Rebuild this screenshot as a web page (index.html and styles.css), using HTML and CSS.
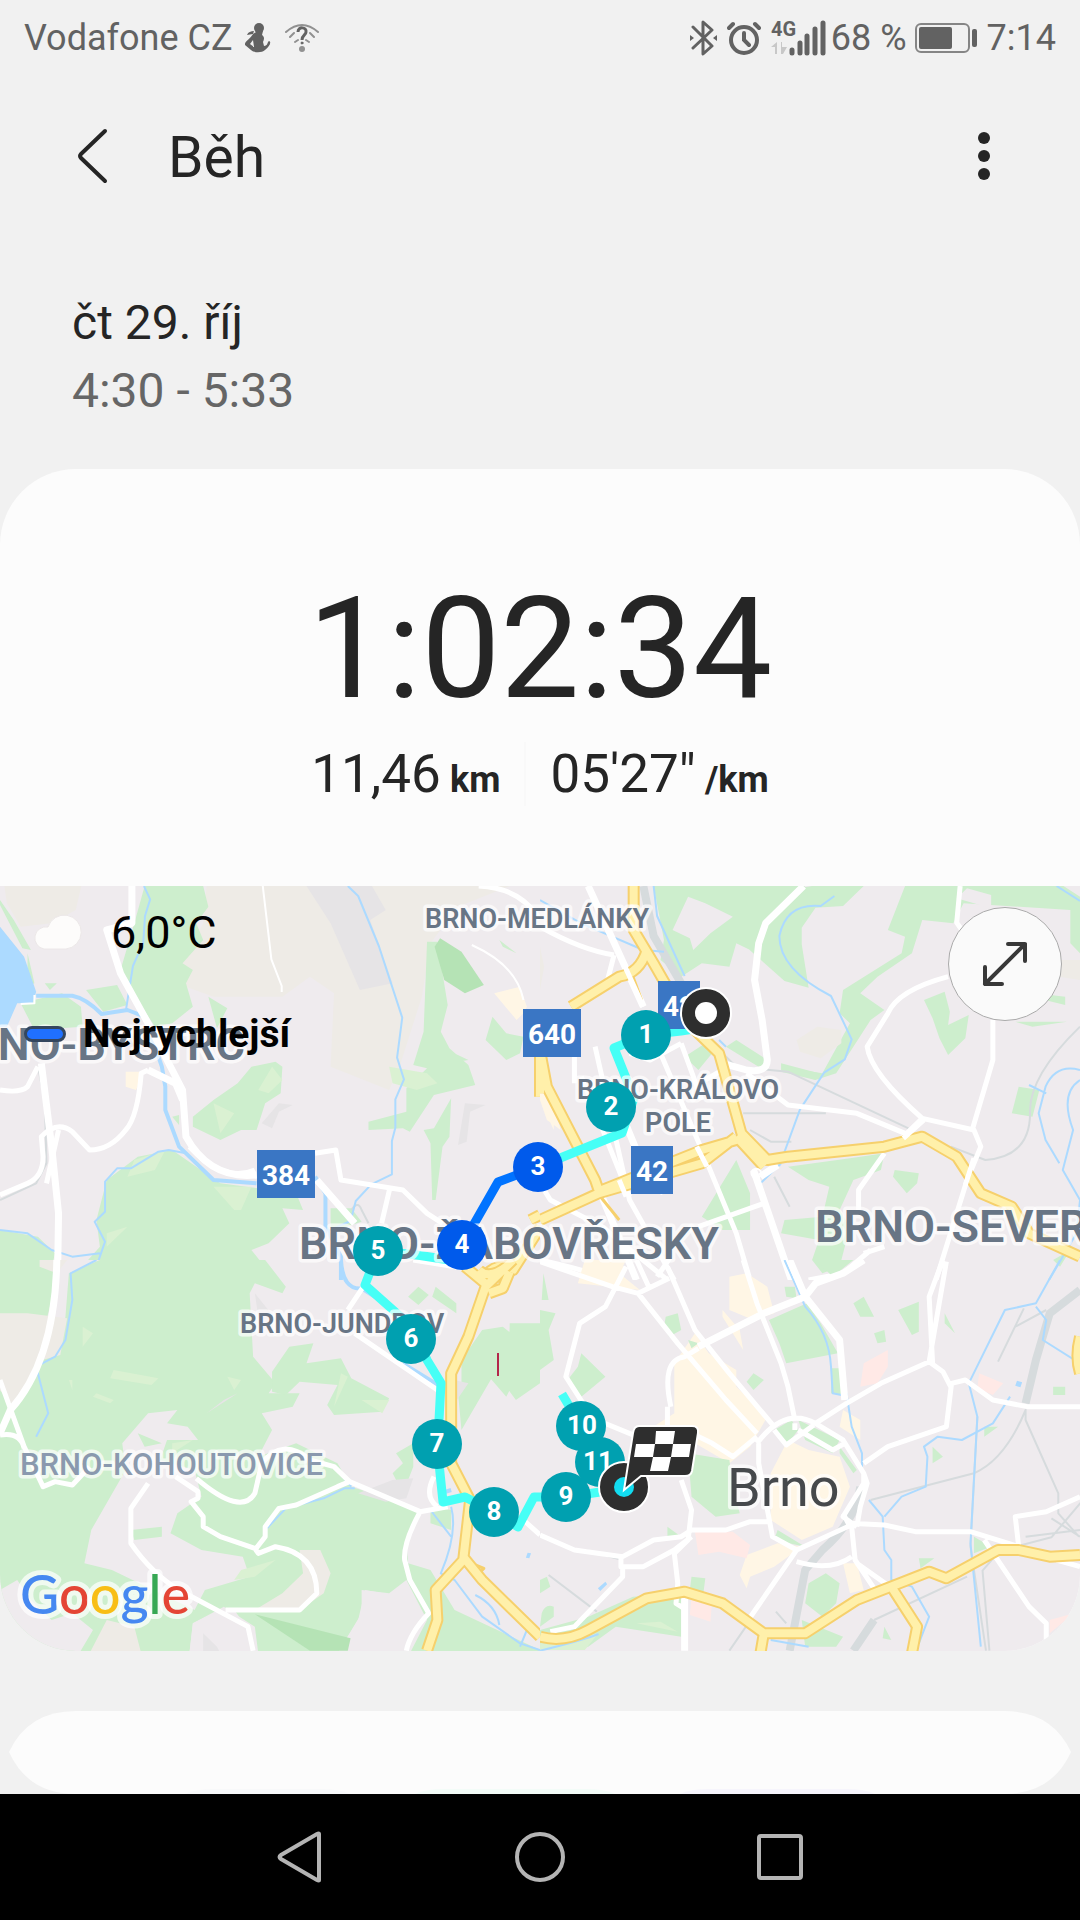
FILE: index.html
```html
<!DOCTYPE html>
<html lang="cs">
<head>
    <meta charset="UTF-8">
    <meta name="viewport" content="width=device-width, initial-scale=1.0">
    <title>Běh</title>
    <link rel="stylesheet" href="styles.css">
</head>
<body>
    <div class="status-bar">
        <div class="status-group status-left">
            <span>Vodafone CZ</span>
            <svg width="26" height="30" viewBox="0 0 26 30" fill="#626262">
                <circle cx="14" cy="5" r="5"/>
                <path d="M10 8h8l-1 4c3 2 2 5 1 7l1 4c4 0 3-4 5-5 3 1 0 6-4 9-3 3-11 3-14 0l-6-5c-1-3 5-6 8-11 1-1 2-1 3-2zM8 17l-3 4 4 3zM2 12c1-3 4-4 7-4l-1 3z" fill-rule="evenodd"/>
            </svg>
            <svg width="36" height="30" viewBox="0 0 36 30" fill="none" stroke="#919191" stroke-width="2" stroke-linecap="round">
                <path d="M2 9Q18-5 34 9M6 14l4-4M30 14l-4-4M11 19l3-2M25 19l-3-2"/>
                <path d="M14 9c0-6 9-5 8 0 0 3-4 3-4 8" stroke="#626262" stroke-width="3" stroke-linecap="butt"/>
                <circle cx="18" cy="20" r="1" fill="#626262" stroke="#626262" stroke-width="1"/>
                <circle cx="18" cy="26" r="3" fill="#919191" stroke="none"/>
            </svg>
        </div>
        <div class="status-group status-right">
            <svg width="28" height="36" viewBox="0 0 28 36" fill="none" stroke="#626262" stroke-width="3" stroke-linejoin="round" stroke-linecap="round">
                <path d="M3 7l19 19-9 8V2l9 8L3 28"/>
                <path d="M0 15v6l4-3zM27 15v6l-4-3z" fill="#626262" stroke="none"/>
            </svg>
            <svg class="icon-alarm" width="34" height="36" viewBox="0 0 34 36" fill="none" stroke="#626262" stroke-width="4" stroke-linecap="round">
                <circle cx="17" cy="20" r="13"/>
                <path d="M17 13v7l5 5M2 8l4-4M32 8l-4-4"/>
            </svg>
            <svg class="icon-signal" width="56" height="36" viewBox="0 0 56 36">
                <text x="1" y="16" class="net-type">4G</text>
                <path d="M7 22v12H5v-7H1zM12 22v5h5l-4 7h-2V22z" fill="#c8c8c8"/>
                <path d="M22 30v3M30 23v10M37 16v17M45 9v24M53 3v30" stroke="#626262" stroke-width="5" stroke-linecap="round"/>
            </svg>
            <span>68 %</span>
            <svg class="icon-battery" width="62" height="30" viewBox="0 0 62 30">
                <rect x="1" y="1" width="53" height="28" rx="5" fill="none" stroke="#858585" stroke-width="2"/>
                <rect x="4" y="4" width="33" height="22" rx="2" fill="#626262"/>
                <rect x="57" y="6" width="5" height="18" rx="2" fill="#626262"/>
            </svg>
            <span>7:14</span>
        </div>
    </div>

    <header class="app-bar">
        <button class="icon-button" type="button" aria-label="Zpět">
            <svg width="34" height="58" viewBox="0 0 34 58" fill="none" stroke="#252525" stroke-width="4" stroke-linecap="round" stroke-linejoin="round">
                <path d="M29 4L5 27q-2 2 0 4l24 23"/>
            </svg>
        </button>
        <h1>Běh</h1>
        <button class="icon-button menu-button" type="button" aria-label="Další možnosti">
            <svg width="12" height="50" viewBox="0 0 12 50" fill="#252525">
                <circle cx="6" cy="7" r="6"/><circle cx="6" cy="25" r="6"/><circle cx="6" cy="43" r="6"/>
            </svg>
        </button>
    </header>

    <div class="date">
        <p>čt 29. říj</p>
        <p class="date-time">4:30 - 5:33</p>
    </div>

    <main class="card">
        <div class="duration">1:02:34</div>
        <div class="stats">
            <div class="stat">11,46 <b>km</b></div>
            <div class="stat">05'27" <b>/km</b></div>
        </div>

        <div class="map">
            <svg class="map-drawing" viewBox="0 0 1080 765">
                <!-- north-west -->
                <svg class="tile" x="0" y="-6" width="540" height="400" viewBox="0 0 1568 1200" preserveAspectRatio="none">
                    <path class="field" d="M10 0H240L220 90 150 130 60 140 20 70zM600 18H1480L1330 80 1250 190 1225 350 1160 560 1130 630 960 560 970 340 900 290 820 350 620 350 540 320 520 270 590 130z"/>
                    <path class="built" d="M890 18H1080L1120 90 1075 120 1140 310 1045 330 960 130zM760 730l50-60 40 5-40 20-20 50zM1350 670l60 5-45 20-10 90-25 10z"/>
                    <path class="park" d="M420 18H590L605 80 570 130 590 180 530 250 560 270 540 310 560 380 500 430 450 440 380 330 350 270 390 130zM60 370L180 340 235 380 240 440 100 450zM250 330l90-15 30 60-70 20zM605 350l55 35-30 60zM130 310h35l-20 20zM0 60l40 60 50 90-25-5-65-130zM80 220l20 90-20 10z"/>
                    <path class="park" d="M690 610L730 560 800 545 820 560 815 640 770 670 745 750 700 750 640 780 560 740 560 710 620 660zM500 710l20-5 0 30z"/>
                    <path class="park" d="M1240 185l30 0 30 190-20 80 25 50 55 50 20 60-120 30-70 110-20-10-100 5 0-25 110-30 0-70 60-60-40-10 30-100zM1310 655l-50 90-30 5 20 40 5 170 10 0 20-160 20-30zM1430 410l40 50 50 10-10 50-40 20-60-60zM1310 515l50 25-30 5zM1450 180l50 40-40-20z"/>
                    <path class="park" d="M400 830L500 810 570 860 640 910 860 940 880 990 820 985 840 1030 780 1090 730 1110 800 1200H190L230 1170 290 1100 280 1020 310 900zM960 985h60l30 40-90 30zM0 1050l110 20 50 50-20 80H0z"/>
                    <path class="wood" d="M1278 175L1340 215 1405 315 1350 340 1290 300 1262 200z"/>
                    <path class="meadow" d="M620 920l110 0-30 70-20 0zM390 840l90-30-30 60-80 20zM790 560l30 40-40 40-30-10zM620 670l60 30-40 60zM1130 560l110 20 30 30-60 20-70-20zM310 1060l60-20-60 60z"/>
                    <path class="urban" d="M365 575h50l-20 55-30-10zM1435 340L1510 320 1530 380 1520 400 1500 420z"/>
                    <path class="water-fill" d="M0 140L70 230 105 335 95 370 50 370 20 440H0z"/>
                    <path class="rail" d="M110 560l20 100 5 190-30 60-105 50M1020 990q20-30 30 0l20 40"/>
                    <path class="river" d="M105 347H210Q250 355 295 402L370 390 420 410 470 560 480 620 480 690 520 800 620 900 745 910M915 890L945 940 945 1040 990 1130V1200"/>
                    <path class="stream" d="M418 18l18 40-15 50-5 80-30 70-20 130M1010 18l30 30 60 150 68 215-15 120 20 65-25 60 0 85-10 40 0 100-60 30-45 50-15 60-65 30M0 1050l80 10 70 50 60 20 80-10M540 820l-50-10-30 5-80 50-40 0-35 40 0 90-30 30 30 60-20 60-65 40-20 40"/>
                    <path class="street" d="M0 630Q60 640 80 620L110 560M0 945L80 910Q125 890 125 830L120 770Q165 720 210 755L260 810Q320 810 365 750 400 710 410 580L430 570M170 750l-35 160M740 870q-90 40-190-70M915 820l60-10 15 90 180 30 70 70 45 30M1133 920l-25 110"/>
                    <path class="lane" d="M763 18l25 220 30 80v18M1370 195q130 60 150 165M100 345l0 25-40 2"/>
                    <path class="street" d="M1390 18q120 5 178 100"/>
                    <path class="road" d="M120 550L150 800 170 1000 167 1200M383 18V130L310 150 350 280 430 430 530 630 540 770Q610 900 745 885M430 570l80 40 20 50M920 900l110 130"/>
                    <path class="highway-case" d="M1568 530v120M1540 1020l28-15M1400 1200q40-60 90-30l80-130"/>
                    <path class="highway" d="M1568 530v120M1540 1020l28-15M1400 1200q40-60 90-30l80-130"/>
                </svg>

                <!-- north-east -->
                <svg class="tile" x="540" y="-6" width="540" height="400" viewBox="0 0 1568 1200" preserveAspectRatio="none">
                    <path class="park" d="M330 18H770L720 70 650 140 640 225 570 190 550 260 470 250 410 290 350 240 360 180zM790 18h150l-60 60-80 5-40 60 0 50 20 130-70-20-120-110 0-70 60-80zM1060 18H1520L1568 50V220L1540 190V90L1230 70 1200 130 1110 120 1080 220 980 290 930 340 1000 390 960 420 910 500 860 580 800 600 700 560 820 580 900 430 870 400 880 330 1050 220 1060 170 1010 150z"/>
                    <path class="ground" d="M430 50l-45 100 50 25 10 35 50-50 65-50-80-40zM1240 25l70 20 0 40-100-30z"/>
                    <path class="park" d="M1115 360l60-25 15 60-5 40 60-30-10 70-50 50-25-50-20-60zM570 480l60 40 30 20-10 30-110-70zM420 530l60-40 20 30-40 50zM1380 425l150 0-100 15zM1390 620l60 10-20 80-60-10zM720 860l180-25 100-15-10 50-80 30-40 90 30 50-30 120-50 20-30-40 20-60-110-20 10-40 110-10 20-90-60-20zM1030 870l70 10-5 30-30 30-40-50zM570 840l40 100 0 110-80 0-60-40zM1490 1140l50-30-30 50zM700 550l110 30-10 20-100-25zM1440 340l85 10 0 25-80-20z"/>
                    <path class="field" d="M745 480l60-40 70 10 0 40-60 45-60-20zM1500 240l68 0v60l-60-10zM0 200l12 60-12 70z"/>
                    <path class="urban" d="M0 540l30 100 30 110-40-30-20-60zM110 1180l60-30 80 10-20 40H130zM0 660l40 60v30z"/>
                    <path class="rail wide" d="M300 18l30 150 90 160"/>
                    <path class="rail" d="M500 490l70 70 150 15 350 170M590 700h240M610 750l60 35h60M680 890l45 90M1568 440q-150 150-145 260 0 130-130 140l-100-40"/>
                    <path class="stream" d="M330 18l10 90 80 180M0 60l120 70 180 80 60 5M855 48l-40 30q-100-10-120 90 0 100 150 180l60 130-20 60-60 40-70 110-60 170M1500 18l68 45M1568 600q-60 40-20 150l-30 120 50 90-10 100-80 140M1568 570q-70-20-100 50l-20 80 20 80 40 70M1420 615l50 25M640 910l60-60M690 1080l50 120M520 480l20 20"/>
                    <path class="street" d="M0 140Q120 210 215 225M215 225l-20 80M1220 18l-10 110 40 60M1185 290Q1040 330 1010 400L950 500Q960 580 1110 715L1260 750 1280 800 1240 900 1150 1200M1315 420l0 120-60 210M1110 715l-60 60M1060 760L920 700 720 675 600 580M1000 820l-75 110 0 60M960 1110l-80 70-100 20M350 520l120 290 100 250 40 140M410 490l60 170M410 490l-90 50-60-20M160 500L260 960 390 1200M0 910l30 50 150 80 190 160M460 1040l190-70M100 530v80M120 590l140 360M340 1190l40-60M0 1140q130 30 210 60M1000 1100l-60 20M480 600l50-30"/>
                    <path class="road" d="M140 18L300 380M765 18L655 130 635 190 623 300 645 420 660 540Q660 580 600 570L530 550M180 950l100 250M620 870l20 60 90 270M640 890l50-35M240 710l40 100 80 130"/>
                    <path class="highway-case" d="M272 18V150L330 250 430 430 520 520 585 760 660 840 720 830 1000 800 1110 770 1210 830 1280 940 1370 980 1420 1060 1568 1130M310 210Q290 280 230 290L90 380M0 640L0 510 20 620 160 900 170 930M0 1020L170 940 470 850 570 770M180 930l290-120 100-30M650 860L570 770"/>
                    <path class="ramp" d="M160 930l70 90M270 290l25 70"/>
                    <path class="highway" d="M272 18V150L330 250 430 430 520 520 585 760 660 840 720 830 1000 800 1110 770 1210 830 1280 940 1370 980 1420 1060 1568 1130M310 210Q290 280 230 290L90 380M0 640L0 510 20 620 160 900 170 930M0 1020L170 940 470 850 570 770M180 930l290-120 100-30M650 860L570 770"/>
                    <path class="street" d="M140 18L300 380M1055 775l60-55M1235 915l25-80M455 800l30 60M230 900l20 50"/>
                    <circle class="lane" cx="628" cy="880" r="14"/>
                </svg>

                <!-- south-west -->
                <svg class="tile" x="0" y="374" width="540" height="400" viewBox="0 0 1568 1200" preserveAspectRatio="none">
                    <path class="park" d="M0 0H770L830 80 820 100 740 70 725 100 735 290 800 370 780 400 870 400 850 440 760 460 790 510 750 590 860 550 980 610 1020 680 1140 720 1220 760 1180 850 1185 910 1250 930 1320 1050 1568 1170V1200H1180L1240 1080 1180 960 1130 1000 1050 990 1050 1060 980 1180H750L740 1100 650 1040 560 1090 550 1180H0z"/>
                    <path class="ground" d="M430 460l85-10-30 40 60 10 30 40-90 0-20 60 100 30 20 80-70 50-20 60 90 50 120 20 20 60-130 40-30 60-240-120-80-20 20-100 100-180-10-80zM620 1060l60-10 50 70 10 60H550l10-90zM50 960l40 60 60 60 60-20 60 50-40 70H0V990zM1060 990l110 20 0 60-140 110h-50l60-100zM180 0h110l-90 40-10 130-20 90-60 20z"/>
                    <path class="field" d="M0 160l80 0 115 15-20 110-70 20-60 140-50-60zM115 0h80l-30 40-50-20zM930 870l30 70-20 60-70 50-130 0 80-50 60-60-10-70zM310 1080l80 20 20 80H260z"/>
                    <path class="park" d="M840 260l70-10-20 60 100-15 30 60 110 60-20 40-140 10-20-30 30-60-110-10-40 40-40-10 0-60zM1215 80l30 25-30 30-30-25zM1265 80l60 50 0 30-70-50zM1200 550l0 70-30 80-30-60 30-30-20-30zM1250 740l60 10 0 60-60-20zM400 520l70 30-50 10zM1400 210l60-10 60 50 0 60-50 100-50-60-80 30 0-80zM380 810l90-10 0 30-80 10zM1480 190l88 0v180l-70 50-50-70 30-70zM1330 400l50-80 60-60-10 90-90 160z"/>
                    <path class="wood" d="M740 1063L1018 1135 1010 1172H900z"/>
                    <path class="meadow" d="M330 330l130 25-20 20-120-20zM240 200l30 20-30 40zM280 400l50 20-10 10-50-20zM990 340l20 10-40 90zM1050 420l80 0-20 40zM700 930l100-30-60 50-60 10zM210 360l0 30-10-30zM660 350l40 10-20 30zM500 550l60-10-60 40z"/>
                    <path class="built" d="M600 460l90-60-40 20zM1040 700l100-40 60-5-20 60-60 10zM740 100l70 90-60-20zM1320 360l40 10-40 60zM590 1120l40 40 10 20h-50z"/>
                    <path class="stream" d="M280 0l-75 40 5 80-20 120-30 50-55 30 35 140-35 70M1310 740q20 80-30 200l40 20 80 110 110 80 58 20M1380 1005q60 30 70 90M1250 750l60 80M1530 1110l-20 50M770 810l60-65 110-30 60-30h30M970 620l50 60"/>
                    <path class="river" d="M990 0q5 90 60 85l90 60M1170 310l110 70M1310 690l-30 10"/>
                    <path class="street" d="M0 360L70 560 125 680 160 665 210 675 260 620M0 525q60-10 70 40M510 650l65 45 0 20-20 10 35 45 0 30 50 30 100 35 10 15 50-20q120 20 120 140l-50 50H655M430 670L380 745V850Q440 940 520 990L720 1100 735 1172M570 655Q700 770 740 700L760 610Q820 530 900 600L970 620 1015 665 980 680 860 735 810 745 770 800V830L740 870M1015 665L1220 755 1300 740M1260 650q-30 60 10 90M1220 755Q1170 850 1175 900L1190 960 1245 1060Q1190 1120 1180 1172M1520 780l48 45M1010 150l45-70M1030 220L1270 390M1200 0l180 30"/>
                    <path class="road" d="M165 0Q160 300 30 450L0 520"/>
                    <path class="highway-case" d="M1390 30q30 30 80-10M1490 0L1410 80 1360 230 1310 340V610L1365 720 1345 900 1265 990 1270 1080 1240 1172M1345 890L1400 960 1568 1130M1350 20l70 60M1420 100l40-15 20-50"/>
                    <path class="ramp" d="M1345 900l60 25-20 20"/>
                    <path class="highway" d="M1390 30q30 30 80-10M1490 0L1410 80 1360 230 1310 340V610L1365 720 1345 900 1265 990 1270 1080 1240 1172M1345 890L1400 960 1568 1130M1350 20l70 60M1420 100l40-15 20-50"/>
                    <path class="water-fill" d="M1532 878l10 2-5 15-10-2z"/>
                </svg>

                <!-- south-east -->
                <svg class="tile" x="540" y="374" width="540" height="400" viewBox="0 0 1568 1200" preserveAspectRatio="none">
                    <path class="urban" d="M130 0h120l-20 40 60 50-180-20zM550 50l50-10 60 40 20 80-60 20-70-30zM530 150l50 60 10 60-60-100zM390 310l60-90 40 60 80 50 0 50 90 90-50 90-60 50-150-90-100 0 90-60zM720 540l60 30 90 20 30 90-50 120-90 40-90-60 0-140zM690 850l70 10-80 60-70 30-10 35-20-40 20-60zM880 910l40 0 20 80-40 10zM880 450l50 30 0 60-60-40z"/>
                    <path class="clinic" d="M450 815l110 0 50 40-10 40-80-20-60 10zM940 310l70-40 0 50-30 50-50 10zM1275 340l70 30-30 35-45-20zM440 1010l60 10-5 65-60-20zM1480 1080l70-20-70 60z"/>
                    <path class="park" d="M665 180l110-50 40 60 50 90-150 30-20-60zM845 325h25l5 80-30-5zM430 580l120 20 10 80 20 80-70 10-70-60zM0 150l45 10-20 50 15 90-40 30zM120 280l70 70-70 60-40-50 30-40zM365 170l35-10 10 50-35 20-15-30zM1040 150l60-25 0 90-20 10zM910 130l30-20 30 60-40 0zM970 220l30-10 5 35-25 5zM800 0h110l-60 50zM680 510l50-30 20 30-30 40zM750 480l120 60-20 40-80-40zM870 560l50 70-10 10-40-60zM690 810l80 50-90-20zM620 340l30 20-30 30-20-25zM780 970l50-30 40 30-10 60-40 40-50-40zM760 1080l120 50-20 30-90 0zM0 1110l140-40 130-60 140-10 0 130-190-30-80 60H0zM440 950l40 5-5 40-40-5zM1100 895l45 0-40 30zM1490 380h35v25h-35zM10 40l15 80-20 0zM1260 830l50 30-50 20zM1140 560l30 30-30 20zM0 960l20-10 10 30-30 20zM1290 500l40 0-40 30zM5 1060q10-30 35-20v30l-40 30zM1000 1100l20 40-25-5zM370 800l40 30-40 0zM710 80l30 0 5 35-30-5zM1175 160l30 60-30-30zM430 240l30 10-20 15z"/>
                    <path class="meadow" d="M0 1150l170-30-40 50H0zM280 1090l70-5 50 30z"/>
                    <path class="rail wide" d="M1568 90L1480 160 1440 300 1410 430M930 680q-10 100-110 190L770 930 725 1172M970 1080l-60 92"/>
                    <path class="rail" d="M960 720l300-80q90-40 150-190v30l95 220v60l60 70M1270 470L1250 860 1295 1172M1305 1172l-20-240 50-60 150-40 90-110M1410 830l158-20M1405 145l-75 160M1380 200l90-50M25 945l140 110M970 1080l270-130M550 1172l60-90M685 1055l30 35M1485 775l83 55M130 870l110 30"/>
                    <path class="stream" d="M710 0l60 140q70 80 75 180l5 80 25 5M890 400l15 100 30 80v60M955 720l40 50 5 100 20 30v60l60 20 50 90-30 80M1000 770l50-60 70-30 5-90-10-30 40-30 70 10 90-50 50-80M1510 0l-70 130-90 20-105 220 25 100-20 380 30 310M1440 140l30 40-10 60 108 70M0 1172q120-30 170-50M670 1140l110 20"/>
                    <path class="street" d="M0 5L210 80 285 100 400 250 540 420 630 520M250 20l-60 120-75 50-40 160 50 80 40 50 130 55M285 100l90-45M370 20l80 190 100 130 130 160M280 0l40 90M0 825l100 45 140 20 90-50 80-10 30-20 100 0 70-25h60M440 830l-50 40-90 50h-65l0-30M240 920l0 30-140 150-70 15M380 440q-30-140 40-150l40-25M370 440v60M410 660l30 90-10 90-40 40 10 90-5 60 30 20M440 520l60 30 60 40 70-60M635 550l0 60 40 220 70 40 170-80M745 870l-140 210M745 905q100 30 160-15M890 430l100-60 140-65 50-300M940 610l70-50 170-60 15-130 40-10 80 60 100 20H1568M940 640l10 30-20 70-10 60M630 550q80-110 170-60l80 50 60 100 0 30-60 100 40 30M900 790l100 5 90 20H1250L1390 860 1380 770 1470 755 1568 710M1130 305l40 30 25 50M905 800l10 100 55 85M920 910l110 80M1290 840l130 200 50 50 0 80M680 510l35 45 80-60M750 510l100 60 35-20M740 490v20M740 480l-20-100-20-70-70-180L590 0M1500 900l68 20M880 760l20 40M1170 0l-40 110 10 200M800 490l90-60"/>
                    <path class="road" d="M460 260L650 160 770 110M725 0l45 110 100 130 15 180M940 0l-60 40-80 30-30 40M420 1000v172"/>
                    <path class="highway-case" d="M0 1130q70 20 140-20L310 1015 420 995 530 1030 650 1120H770L920 1020 1130 935 1180 955 1330 870 1390 870 1480 890 1568 885M650 1120l-10 60M1020 980L1095 1100 1080 1180M1568 230q-15 60 0 110"/>
                    <path class="highway" d="M0 1130q70 20 140-20L310 1015 420 995 530 1030 650 1120H770L920 1020 1130 935 1180 955 1330 870 1390 870 1480 890 1568 885M650 1120l-10 60M1020 980L1095 1100 1080 1180M1568 230q-15 60 0 110"/>
                    <path class="water-fill" d="M1385 362l15 5-5 15-15-5zM168 985l22-20 5 8-20 20z"/>
                </svg>

                <rect x="497" y="467" width="2" height="23" fill="#b3264a"/>

                <polyline class="route" points="706,141 681,145 646,149 614,162 634,212 622,247 538,281"/>
                <polyline class="route route-fast" points="538,281 498,296 462,359"/>
                <polyline class="route" points="462,376 417,369 378,365 365,399 411,440 427,474 441,497 439,534 437,558 443,616 465,611 494,626 518,641 534,611 567,611 600,606 624,601 600,576 581,540 562,508"/>

                <g class="place">
                    <text x="425" y="42">BRNO-MEDLÁNKY</text>
                    <text x="678" y="213" text-anchor="middle">BRNO-KRÁLOVO</text>
                    <text x="678" y="246" text-anchor="middle">POLE</text>
                    <text x="240" y="447">BRNO-JUNDROV</text>
                    <text x="20" y="589" class="place-faded">BRNO-KOHOUTOVICE</text>
                    <text x="245" y="174" text-anchor="end" class="place-large">BRNO-BYSTRC</text>
                    <text x="299" y="373" class="place-large">BRNO-ŽABOVŘESKY</text>
                    <text x="815" y="356" class="place-large">BRNO-SEVER</text>
                    <text x="727" y="620" class="place-city">Brno</text>
                </g>

                <g class="shield">
                    <rect x="523" y="123" width="58" height="48"/><text x="552" y="158">640</text>
                    <rect x="658" y="95" width="42" height="48"/><text x="679" y="130">42</text>
                    <rect x="257" y="264" width="58" height="48"/><text x="286" y="299">384</text>
                    <rect x="631" y="260" width="42" height="48"/><text x="652" y="295">42</text>
                </g>

                <g class="pin">
                    <circle cx="646" cy="149" r="25"/><text x="646" y="157">1</text>
                    <circle cx="611" cy="221" r="25"/><text x="611" y="229">2</text>
                    <circle class="pin-fast" cx="538" cy="281" r="25"/><text x="538" y="289">3</text>
                    <circle class="pin-fast" cx="462" cy="359" r="25"/><text x="462" y="367">4</text>
                    <circle cx="378" cy="365" r="25"/><text x="378" y="373">5</text>
                    <circle cx="411" cy="453" r="25"/><text x="411" y="461">6</text>
                    <circle cx="437" cy="558" r="25"/><text x="437" y="566">7</text>
                    <circle cx="494" cy="626" r="25"/><text x="494" y="634">8</text>
                    <circle cx="600" cy="576" r="25"/><text x="598" y="584">11</text>
                    <circle cx="581" cy="540" r="25"/><text x="582" y="548">10</text>
                    <circle cx="566" cy="611" r="25"/><text x="566" y="619">9</text>
                </g>

                <circle cx="706" cy="127" r="25" fill="#2e2e2e" stroke="#fff" stroke-width="2"/>
                <circle cx="706" cy="127" r="11" fill="#fff"/>
                <circle cx="624" cy="601" r="25" fill="#2e2e2e" stroke="#fff" stroke-width="2"/>
                <circle cx="624" cy="601" r="10" fill="#12dcf0"/>
                <path d="M639 540h53q7 0 6 7l-6 38q-1 5-7 5h-44l-17 14 9-57q1-7 6-7z" fill="#2e2e2e" stroke="#fff" stroke-width="2"/>
                <path d="M656 545h19l-2 13h18l-2 13h-18l-3 14h-18l3-14h-19l2-13h19z" fill="#fff"/>
                <path d="M655 558h18l-2 13h-18z" fill="#2e2e2e"/>

                <text x="20" y="728" class="google"><tspan fill="#4688f1">G</tspan><tspan fill="#e44535">o</tspan><tspan fill="#f8be16">o</tspan><tspan fill="#4688f1">g</tspan><tspan fill="#37a854">l</tspan><tspan fill="#e44535">e</tspan></text>
            </svg>

            <div class="map-info">
                <div class="map-row">
                    <svg width="52" height="36" viewBox="0 0 52 36">
                        <path d="M12 35a11 11 0 1 1 4-22 17 17 0 1 1 18 22z" fill="#fdfcfb" stroke="#ece8e8"/>
                    </svg>
                    <span class="temperature">6,0°C</span>
                </div>
                <div class="map-row">
                    <span class="fast-swatch"></span>
                    <span class="fast-label">Nejrychlejší</span>
                </div>
            </div>

            <button class="expand" type="button" aria-label="Zvětšit mapu">
                <svg width="46" height="46" viewBox="0 0 46 46" fill="none" stroke="#383838" stroke-width="4" stroke-linecap="round" stroke-linejoin="round">
                    <path d="M3 43L43 3M26 3h17v17M20 43H3V26"/>
                </svg>
            </button>
        </div>
    </main>

    <section class="next-card" aria-label="Podrobnosti">
        <svg viewBox="0 0 1080 83" preserveAspectRatio="none">
            <path d="M9 41Q28 0 76 0H1004Q1052 0 1071 41Q1052 83 1004 83H76Q28 83 9 41z" fill="#fcfcfc"/>
            <path d="M185 83q10-5 30-5h105q20 0 30 5z" fill="#f8f9fa"/>
            <path d="M415 83q10-5 30-5h140q20 0 30 5z" fill="#f3fcf8"/>
            <path d="M680 83q10-5 30-5h135q20 0 30 5z" fill="#f6f5fc"/>
        </svg>
    </section>

    <nav class="nav-bar">
        <button type="button" aria-label="Zpět">
            <svg width="50" height="52" viewBox="0 0 50 52"><path d="M44 3v46q0 1-2 0L6 28q-3-2 0-4L42 3q2-1 2 0z"/></svg>
        </button>
        <button type="button" aria-label="Domů">
            <svg width="50" height="52" viewBox="0 0 50 52"><circle cx="25" cy="26" r="23"/></svg>
        </button>
        <button type="button" aria-label="Poslední aplikace">
            <svg width="50" height="52" viewBox="0 0 50 52"><rect x="4" y="5" width="42" height="42" rx="2"/></svg>
        </button>
    </nav>
</body>
</html>
```

FILE: styles.css
```css
* {
    box-sizing: border-box;
}
body {
    margin: 0;
    min-height: 100vh;
    display: flex;
    flex-direction: column;
    background: #f1f1f1;
    color: #252525;
    font-family: Roboto, sans-serif;
}
h1,
p {
    margin: 0;
    font-weight: 400;
}
button {
    padding: 0;
    border: none;
    background: none;
    cursor: pointer;
}
svg {
    display: block;
}

/* status bar */
.status-bar {
    display: flex;
    justify-content: space-between;
    align-items: center;
    height: 76px;
    padding: 0 24px;
    font-size: 36px;
    color: #626262;
}
.status-group {
    display: flex;
    align-items: center;
}
.status-left {
    gap: 13px;
}
.icon-alarm {
    margin: 0 9px;
}
.icon-signal {
    margin-right: 5px;
}
.icon-battery {
    margin: 0 10px 0 8px;
}
.net-type {
    font-size: 20px;
    font-weight: 700;
    fill: #626262;
}

/* header */
.app-bar {
    display: flex;
    align-items: center;
    height: 160px;
    padding: 0 72px;
}
.app-bar h1 {
    flex: 1;
    padding: 4px 0 0 28px;
    font-size: 57px;
    line-height: 64px;
}
.icon-button {
    display: flex;
    align-items: center;
    justify-content: center;
    width: 68px;
    height: 96px;
}
.icon-button:first-child {
    justify-content: flex-start;
    padding-left: 4px;
}
.menu-button {
    width: 48px;
}
.date {
    padding: 53px 72px 44px;
    font-size: 48px;
    line-height: 68px;
}
.date-time {
    color: #666;
}

/* workout card */
.card {
    padding-top: 108px;
    border-radius: 76px;
    background: #fcfcfc;
    overflow: hidden;
}
.duration {
    font-size: 141px;
    line-height: 144px;
    text-align: center;
}
.stats {
    display: flex;
    justify-content: center;
    padding: 21px 0 80px;
}
.stat {
    height: 64px;
    padding: 0 24px;
    font-size: 53px;
    line-height: 64px;
    white-space: nowrap;
}
.stat + .stat {
    border-left: 2px solid #f9f9f9;
}
.stat b {
    margin-left: -4px;
    font-size: 36px;
    line-height: 1;
}

/* map */
.map {
    position: relative;
    background: #efebee;
}
.map-drawing {
    width: 100%;
    height: auto;
}
.tile path,
.tile circle {
    vector-effect: non-scaling-stroke;
    stroke-linejoin: round;
}
.ground { fill: #efebee; }
.field { fill: #eeebe6; }
.built { fill: #e6e4e6; }
.park { fill: #cdeecd; }
.wood { fill: #b5e3b5; }
.meadow { fill: #daf1d2; }
.urban { fill: #fff6e5; }
.clinic { fill: #ffe9e6; }
.water-fill { fill: #acdaff; }
.river,
.stream,
.lane,
.street,
.road,
.rail,
.ramp,
.highway,
.highway-case {
    fill: none;
}
.river {
    stroke: #acdaff;
    stroke-width: 4px;
}
.stream {
    stroke: #acdaff;
    stroke-width: 2px;
}
.rail {
    stroke: #d6dbdd;
    stroke-width: 2px;
}
.rail.wide {
    stroke-width: 8px;
}
.lane {
    stroke: #fff;
    stroke-width: 2px;
}
.street {
    stroke: #fff;
    stroke-width: 5px;
}
.road {
    stroke: #fff;
    stroke-width: 7px;
}
.ramp {
    stroke: #f6d06c;
    stroke-width: 3px;
}
.highway-case {
    stroke: #f6d06c;
    stroke-width: 12px;
}
.highway {
    stroke: #fff0aa;
    stroke-width: 8px;
}
.place text {
    font-size: 27px;
    font-weight: 600;
    fill: #687585;
    stroke: rgba(255, 255, 255, 0.7);
    stroke-width: 7px;
    stroke-linejoin: round;
    paint-order: stroke;
}
.place .place-large {
    font-size: 45px;
}
.place .place-faded {
    font-size: 31px;
    font-weight: 500;
    fill: #8a99ae;
}
.place .place-city {
    font-size: 54px;
    font-weight: 400;
    fill: #46494c;
}
.shield rect {
    fill: #3a76c4;
}
.shield text {
    font-size: 28px;
    font-weight: 700;
    fill: #fff;
    text-anchor: middle;
}
.route {
    fill: none;
    stroke: #46fff6;
    stroke-width: 9px;
    stroke-linejoin: round;
}
.route-fast {
    stroke: #0073ff;
}
.pin circle {
    fill: #00a0b0;
}
.pin .pin-fast {
    fill: #005aeb;
}
.pin text {
    font-size: 26px;
    font-weight: 700;
    fill: #fff;
    text-anchor: middle;
}
.google {
    font-family: Lato, sans-serif;
    font-size: 54px;
    font-weight: 500;
    stroke: rgba(255, 255, 255, 0.7);
    stroke-width: 10px;
    stroke-linejoin: round;
    paint-order: stroke;
}
.map-info {
    position: absolute;
    top: 0;
    left: 0;
    display: flex;
    flex-direction: column;
    gap: 10px;
    color: #000;
}
.map-row {
    display: flex;
    align-items: center;
    height: 92px;
}
.map-row svg {
    margin: 0 27px 0 32px;
}
.temperature {
    font-size: 45px;
    line-height: 64px;
    padding-top: 2px;
}
.fast-swatch {
    width: 42px;
    height: 16px;
    margin: 0 17px 0 24px;
    border: 3px solid #34465f;
    border-radius: 8px;
    background: #2070ff;
}
.fast-label {
    font-size: 39px;
    font-weight: 700;
}
.expand {
    position: absolute;
    top: 21px;
    right: 18px;
    display: flex;
    align-items: center;
    justify-content: center;
    width: 114px;
    height: 114px;
    border: 1px solid #aaa;
    border-radius: 50%;
    background: #fafafa;
}

/* next card, cut off by the navigation bar */
.next-card {
    margin-top: 60px;
}
.next-card svg {
    width: 100%;
    height: 83px;
}

.nav-bar {
    display: flex;
    justify-content: center;
    align-items: center;
    gap: 190px;
    height: 126px;
    margin-top: auto;
    background: #000;
}
.nav-bar svg {
    fill: none;
    stroke: #b4b4b4;
    stroke-width: 4px;
}
```
